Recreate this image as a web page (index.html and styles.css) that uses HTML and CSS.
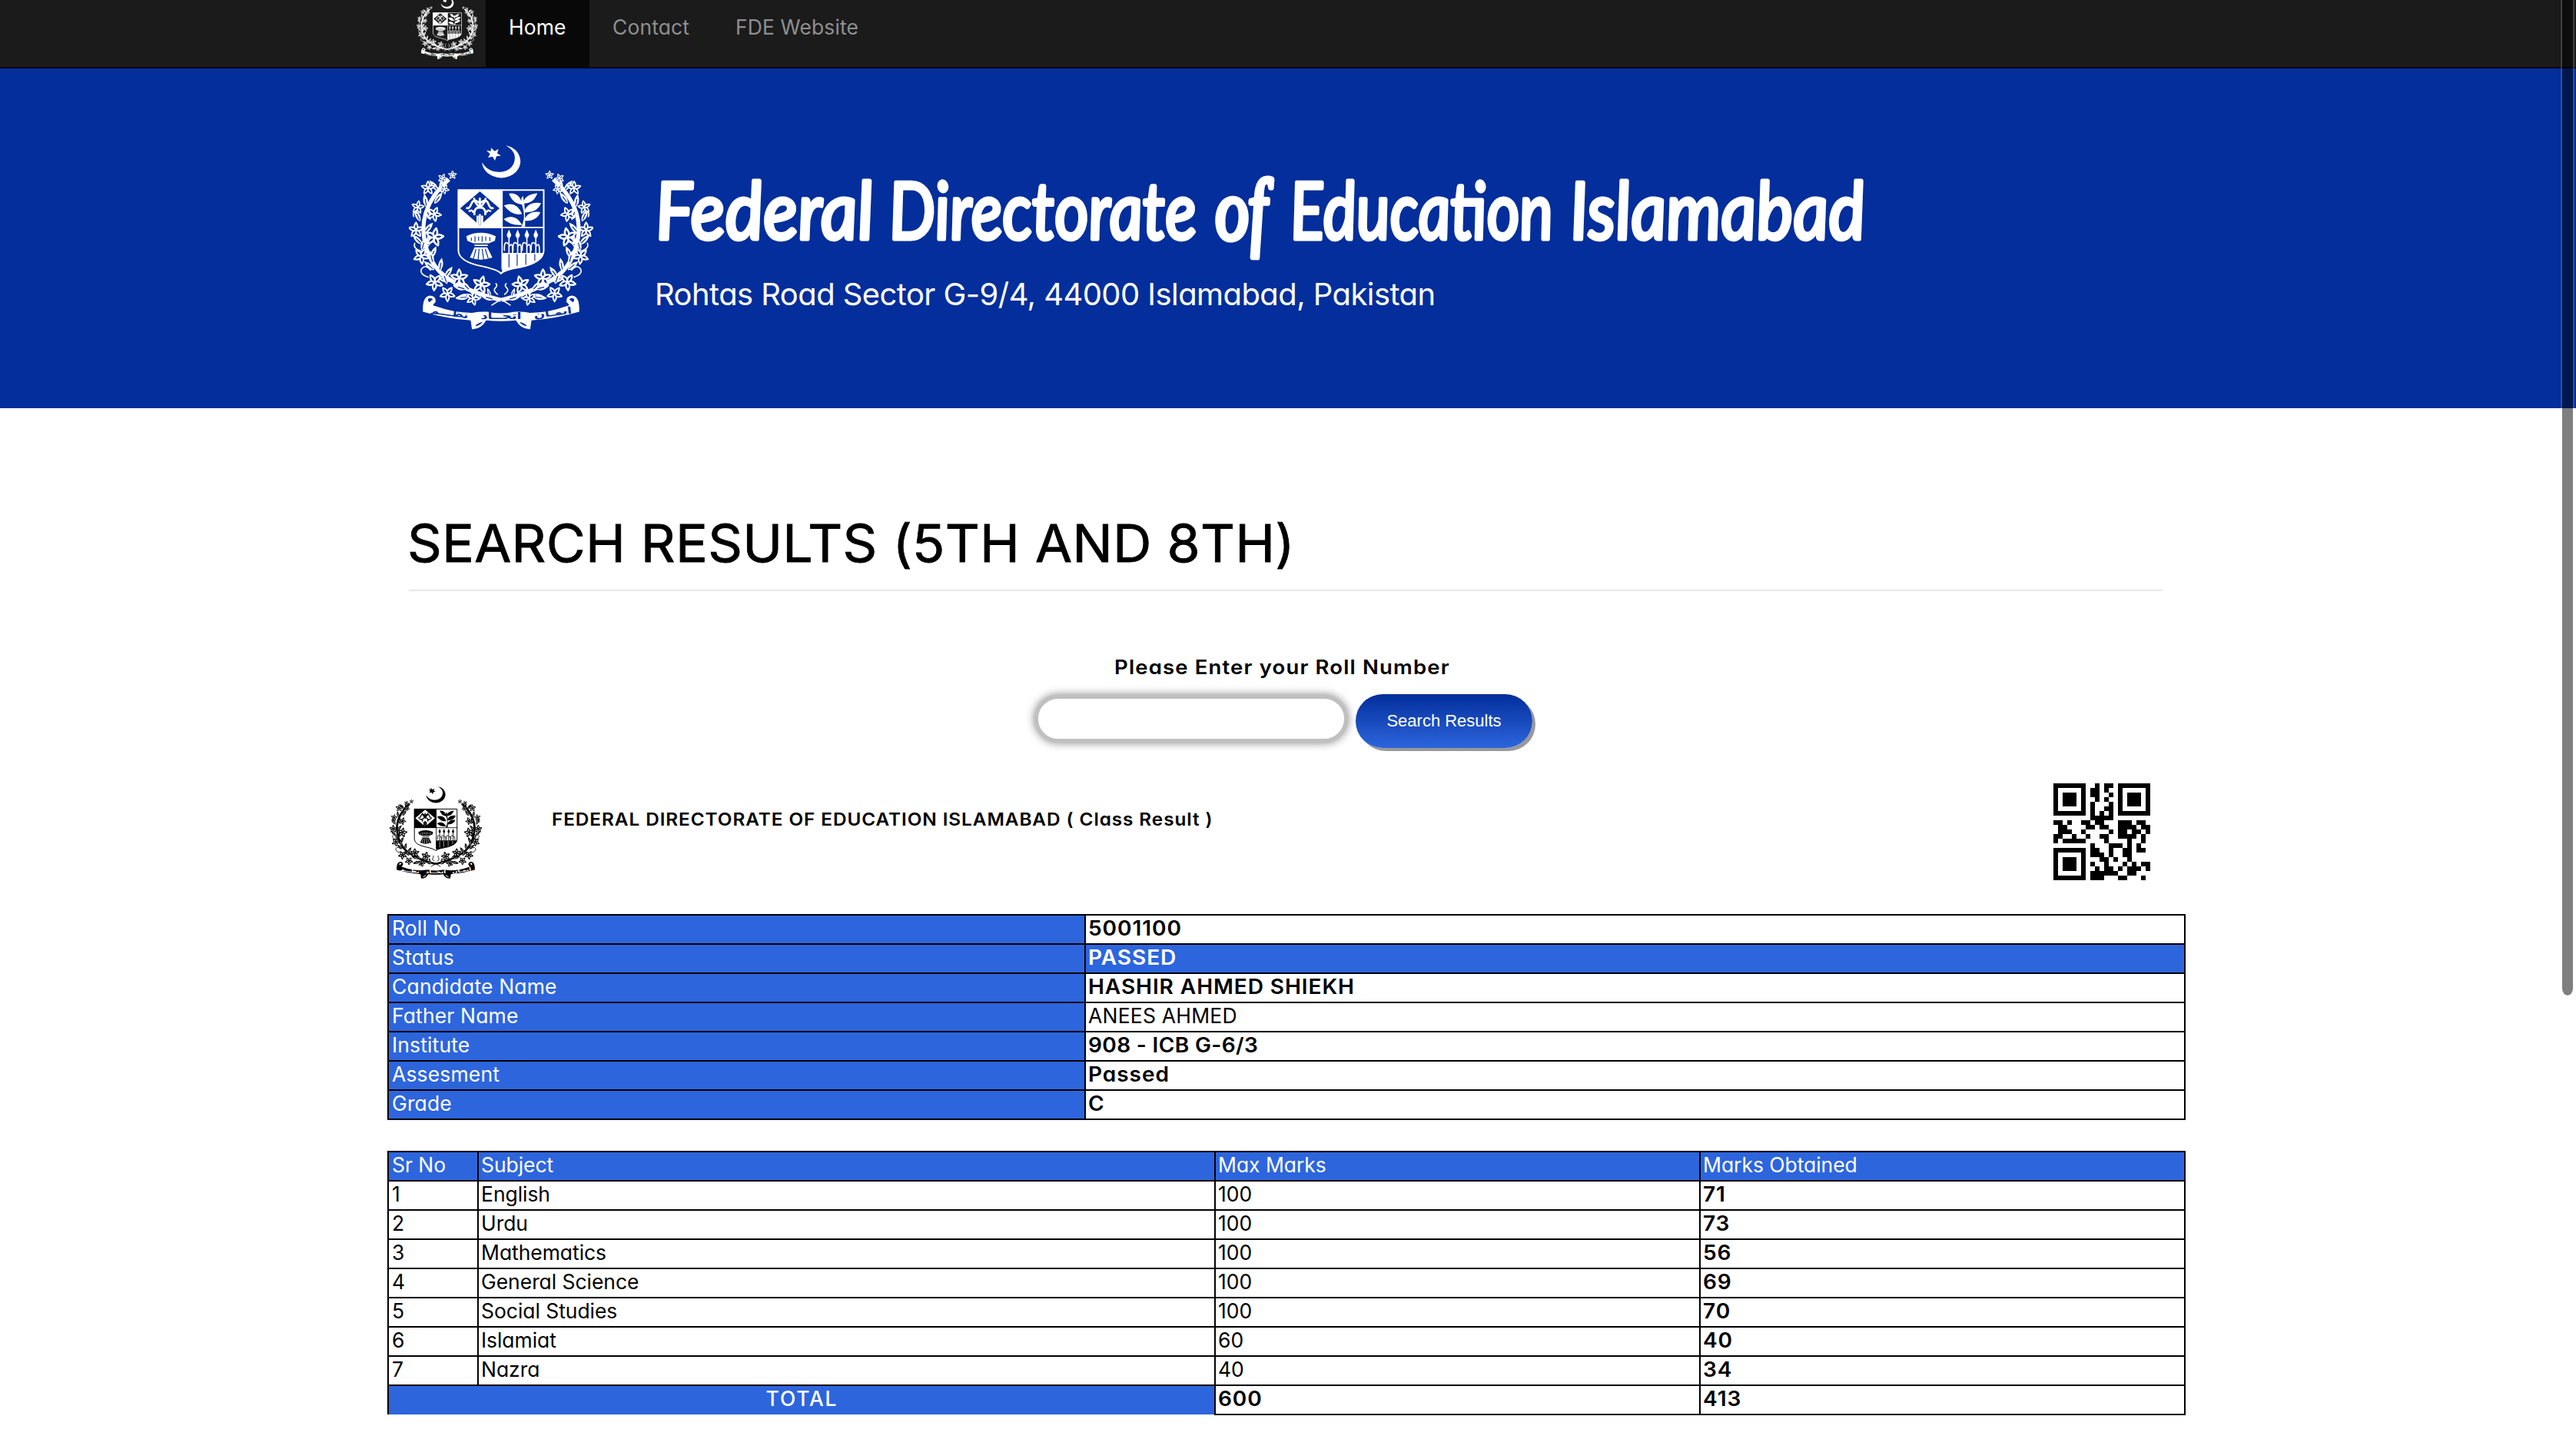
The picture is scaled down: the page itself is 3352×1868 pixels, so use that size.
FILE: index.html
```html
<!DOCTYPE html>
<html lang="en">
<head>
<meta charset="utf-8">
<title>Federal Directorate of Education Islamabad</title>
<link rel="stylesheet" href="styles.css">
</head>
<body>
<svg class="defs" aria-hidden="true">
  <defs>
    <g id="flower">
      <path id="petal" class="cut" d="M0 0Q-14 -12 0 -31Q14 -12 0 0Z"/>
      <use href="#petal" transform="rotate(72)"/>
      <use href="#petal" transform="rotate(144)"/>
      <use href="#petal" transform="rotate(216)"/>
      <use href="#petal" transform="rotate(288)"/>
      <circle class="ink" r="5"/>
    </g>
    <g id="leaf">
      <path class="ink" d="M0 0Q-19 -22 0 -54Q19 -22 0 0Z"/>
      <path class="vein" d="M0 -8V-34"/>
    </g>
    <g id="branch">
      <path class="stem" d="M222 190Q120 280 122 390Q128 500 200 565Q290 630 425 662"/>
      <use href="#leaf" transform="translate(195 245) rotate(-5)"/>
      <use href="#leaf" transform="translate(180 235) rotate(-40)"/>
      <use href="#leaf" transform="translate(165 285) rotate(35)"/>
      <use href="#leaf" transform="translate(135 300) rotate(-10)"/>
      <use href="#leaf" transform="translate(150 350) rotate(-20)"/>
      <use href="#leaf" transform="translate(110 355) rotate(-25)"/>
      <use href="#leaf" transform="translate(125 400) rotate(40)"/>
      <use href="#leaf" transform="translate(140 455) rotate(5)"/>
      <use href="#leaf" transform="translate(118 445) rotate(-45)"/>
      <use href="#leaf" transform="translate(115 470) rotate(15)"/>
      <use href="#leaf" transform="translate(150 500) rotate(25)"/>
      <use href="#leaf" transform="translate(160 520) rotate(-15)"/>
      <use href="#leaf" transform="translate(165 545) rotate(-50)"/>
      <use href="#leaf" transform="translate(185 550) rotate(10)"/>
      <use href="#leaf" transform="translate(205 575) rotate(35)"/>
      <use href="#leaf" transform="translate(225 590) rotate(-70)"/>
      <use href="#leaf" transform="translate(215 600) rotate(-20)"/>
      <use href="#leaf" transform="translate(290 620) rotate(-75)"/>
      <use href="#leaf" transform="translate(305 625) rotate(-45)"/>
      <use href="#leaf" transform="translate(300 640) rotate(-110)"/>
      <use href="#leaf" transform="translate(350 655) rotate(-60)"/>
      <use href="#leaf" transform="translate(300 650) rotate(-95)"/>
      <use href="#leaf" transform="translate(400 660) rotate(-75)"/>
      <use href="#leaf" transform="translate(385 650) rotate(-20) scale(.7)"/>
      <path class="line" d="M140 572Q105 560 115 540Q130 520 150 545M112 470Q80 460 88 440M84 335Q78 320 92 312"/>
      <path class="line" d="M462 682L420 655M412 640Q392 625 404 614Q414 604 406 598"/>
      <use href="#flower" transform="translate(236 173) scale(.52)"/>
      <use href="#flower" transform="translate(197 186) scale(.58) rotate(20)"/>
      <use href="#flower" transform="translate(140 224) scale(.85)"/>
      <use href="#flower" transform="translate(204 228) scale(.6) rotate(30)"/>
      <use href="#flower" transform="translate(100 299) scale(.8) rotate(10)"/>
      <use href="#flower" transform="translate(164 326) scale(.9) rotate(25)"/>
      <use href="#flower" transform="translate(93 388) scale(.95)"/>
      <use href="#flower" transform="translate(165 416) scale(1.15) rotate(12)"/>
      <use href="#flower" transform="translate(114 490) scale(1) rotate(30)"/>
      <use href="#flower" transform="translate(166 592) scale(1.05) rotate(40)"/>
      <use href="#flower" transform="translate(262 576) scale(1.08)"/>
      <use href="#flower" transform="translate(348 602) scale(1.08) rotate(15)"/>
      <use href="#flower" transform="translate(216 638) scale(.95) rotate(35)"/>
      <use href="#flower" transform="translate(316 656) scale(.85) rotate(20)"/>
    </g>
    <g id="jute">
      <path class="ink" d="M-9 20L0 -2L9 20L5 30H-5Z"/>
      <path class="line" d="M0 26V92M-3 54Q-20 38 -18 80M3 62Q16 44 14 92"/>
    </g>
    <symbol id="emblem" viewBox="65 55 722 722">
      <path class="ink" d="M443 57C480 62 502 90 502 120C500 160 465 184 425 184C385 182 352 155 352 123C365 150 395 163 425 161C460 158 480 135 480 105C480 85 465 67 443 57Z"/>
      <path class="ink" d="M387 66L401 80L416 71L411 88L426 97L408 99L402 117L393 101L375 105L383 90L369 77L386 80Z"/>
      <use href="#branch"/>
      <use href="#branch" transform="matrix(-1 0 0 1 852 0)"/>
      <path class="shield" d="M259 232H593V470Q590 515 500 534Q440 543 426 558Q412 543 352 530Q262 512 259 470Z"/>
      <path class="ink" d="M257 230H430V380H257Z"/>
      <path class="ground" d="M343 237L420 303L343 370L266 303Z"/>
      <path class="thick" d="M343 262V300M343 300Q318 300 322 330M343 300Q368 300 364 330M343 285Q320 260 310 285T290 300M343 285Q366 260 376 285T396 300M320 262Q322 282 343 300Q364 282 366 262M334 332V366M343 326V368M352 332V366M300 316Q312 305 318 320M386 316Q374 305 368 320"/>
      <path class="line" d="M430 232V540M259 378H593"/>
      <path class="ink" d="M505 375Q525 340 508 290Q500 262 512 255Q522 300 520 375ZM508 288Q470 285 457 245Q500 240 508 288ZM512 285Q515 250 568 244Q555 285 512 285ZM508 325Q470 335 437 292Q485 272 508 325ZM516 318Q530 275 583 283Q565 325 516 318ZM508 368Q465 372 436 345Q480 320 508 368ZM516 352Q530 310 580 318Q565 355 516 352Z"/>
      <path class="ink" d="M290 412Q345 385 405 412L402 430L378 440H318L294 430ZM322 456H372L392 496Q345 512 304 496Z"/>
      <path class="vein" d="M310 418V430M324 412V434M338 414V430M352 412V434M366 414V430M382 416V432M328 462L318 500M340 462L336 504M352 462L358 504M364 462L376 500"/>
      <path class="line" d="M324 448H372"/>
      <use href="#jute" transform="translate(457 388)"/>
      <use href="#jute" transform="translate(491 388)"/>
      <use href="#jute" transform="translate(527 388)"/>
      <use href="#jute" transform="translate(562 388)"/>
      <path class="ink" d="M430 478H593Q590 515 500 534Q440 543 430 556Z"/>
      <path class="vein" d="M457 482V534M489 482V528M523 482V524M558 482V508"/>
      <path class="ink" d="M120 690Q122 648 148 645Q172 646 170 670Q150 685 170 686Q240 712 312 712Q345 706 372 708Q426 720 480 708Q510 706 540 712Q612 712 682 686Q702 685 682 670Q680 646 704 645Q730 648 732 690V708Q640 735 545 742L540 776Q505 778 484 742Q426 748 368 742Q347 778 312 776L307 742Q212 735 120 708Z"/>
      <path class="cut" d="M148 676Q130 665 140 654Q156 646 164 662Q150 666 148 676ZM704 676Q722 665 712 654Q696 646 688 662Q702 666 704 676ZM318 768Q325 750 360 742Q350 768 318 768ZM534 768Q527 750 492 742Q502 768 534 768Z"/>
      <g class="motto">
        <text x="222" y="724" transform="rotate(8 222 722)" textLength="150" lengthAdjust="spacingAndGlyphs">نظـــم</text>
        <text x="426" y="736" textLength="160" lengthAdjust="spacingAndGlyphs">اتحــاد</text>
        <text x="630" y="724" transform="rotate(-8 630 722)" textLength="150" lengthAdjust="spacingAndGlyphs">ایمـان</text>
      </g>
    </symbol>
  </defs>
</svg>

<nav class="navbar">
  <a class="brand" href="#"><svg class="emblem"><use href="#emblem"/></svg></a>
  <a class="nav-link active" href="#">Home</a>
  <a class="nav-link" href="#">Contact</a>
  <a class="nav-link" href="#">FDE Website</a>
</nav>

<header class="banner">
  <svg class="emblem banner-emblem"><use href="#emblem"/></svg>
  <div class="banner-text">
    <svg class="script-title" viewBox="0 0 1600 135" role="heading" aria-level="1">
      <g transform="translate(0 88) skewX(4)">
        <text x="2" textLength="284" lengthAdjust="spacingAndGlyphs">Federal</text>
        <text x="306" textLength="400" lengthAdjust="spacingAndGlyphs">Directorate</text>
        <text class="deep" x="730" textLength="68" lengthAdjust="spacingAndGlyphs">of</text>
        <text x="828" textLength="342" lengthAdjust="spacingAndGlyphs">Education</text>
        <text x="1192" textLength="384" lengthAdjust="spacingAndGlyphs">Islamabad</text>
      </g>
    </svg>
    <p class="address">Rohtas Road Sector G-9/4, 44000 Islamabad, Pakistan</p>
  </div>
</header>

<main>
  <h1 class="page-title"><span class="wide">SEARCH RESULTS (5TH AND 8TH)</span></h1>

  <form class="search">
    <label class="search-label" for="roll"><span class="wide">Please Enter your Roll Number</span></label>
    <div class="search-row">
      <input class="search-input" id="roll" type="text">
      <button class="search-button" type="button">Search Results</button>
    </div>
  </form>

  <section class="result">
    <div class="result-head">
      <svg class="emblem result-emblem"><use href="#emblem"/></svg>
      <h2 class="result-title"><span class="wide">FEDERAL DIRECTORATE OF EDUCATION ISLAMABAD ( Class Result )</span></h2>
      <svg class="qr" viewBox="0 0 21 21">
        <path fill-rule="evenodd" d="M0 0h7v7h-7zM1 1v5h5v-5zM2 2h3v3h-3zM14 0h7v7h-7zM15 1v5h5v-5zM16 2h3v3h-3zM0 14h7v7h-7zM1 15v5h5v-5zM2 16h3v3h-3z"/>
        <path d="M9 0h1v1h-1zM11 0h2v1h-2zM8 1h2v1h-2zM11 1h1v1h-1zM8 2h2v1h-2zM12 2h1v1h-1zM9 3h1v1h-1zM11 3h1v1h-1zM8 4h1v1h-1zM12 4h1v1h-1zM8 5h1v1h-1zM11 5h2v1h-2zM8 6h1v1h-1zM10 6h1v1h-1zM12 6h1v1h-1zM8 7h5v1h-5z
          M0 8h2v1h-2zM3 8h1v1h-1zM6 8h2v1h-2zM9 8h2v1h-2zM14 8h3v1h-3zM18 8h2v1h-2zM1 9h2v1h-2zM7 9h2v1h-2zM10 9h2v1h-2zM14 9h4v1h-4zM19 9h2v1h-2zM1 10h3v1h-3zM6 10h1v1h-1zM12 10h1v1h-1zM14 10h2v1h-2zM17 10h2v1h-2zM20 10h1v1h-1z
          M0 11h2v1h-2zM4 11h1v1h-1zM7 11h1v1h-1zM10 11h2v1h-2zM14 11h4v1h-4zM19 11h1v1h-1zM0 12h1v1h-1zM2 12h5v1h-5zM11 12h1v1h-1zM16 12h1v1h-1zM19 12h1v1h-1zM8 13h1v1h-1zM12 13h3v1h-3zM16 13h1v1h-1zM18 13h1v1h-1z
          M8 14h2v1h-2zM12 14h1v1h-1zM15 14h2v1h-2zM18 14h2v1h-2zM8 15h3v1h-3zM12 15h1v1h-1zM15 15h2v1h-2zM10 16h2v1h-2zM13 16h1v1h-1zM16 16h1v1h-1zM8 17h1v1h-1zM11 17h1v1h-1zM15 17h1v1h-1zM17 17h1v1h-1zM19 17h2v1h-2z
          M9 18h1v1h-1zM11 18h2v1h-2zM14 18h1v1h-1zM16 18h3v1h-3zM20 18h1v1h-1zM8 19h6v1h-6zM16 19h2v1h-2zM8 20h3v1h-3zM14 20h2v1h-2zM19 20h1v1h-1z"/>
      </svg>
    </div>

    <table class="grid info">
      <colgroup><col class="c-name"><col></colgroup>
      <tr><th>Roll No</th><td><b>5001100</b></td></tr>
      <tr><th>Status</th><td class="fill"><b>PASSED</b></td></tr>
      <tr><th>Candidate Name</th><td><b>HASHIR AHMED SHIEKH</b></td></tr>
      <tr><th>Father Name</th><td>ANEES AHMED</td></tr>
      <tr><th>Institute</th><td><b class="tight">908 - ICB G-6/3</b></td></tr>
      <tr><th>Assesment</th><td><b>Passed</b></td></tr>
      <tr><th>Grade</th><td><b>C</b></td></tr>
    </table>

    <table class="grid marks">
      <colgroup><col class="c-sr"><col class="c-subject"><col class="c-max"><col></colgroup>
      <tr><th>Sr No</th><th>Subject</th><th>Max Marks</th><th>Marks Obtained</th></tr>
      <tr><td>1</td><td>English</td><td>100</td><td><b>71</b></td></tr>
      <tr><td>2</td><td>Urdu</td><td>100</td><td><b>73</b></td></tr>
      <tr><td>3</td><td>Mathematics</td><td>100</td><td><b>56</b></td></tr>
      <tr><td>4</td><td>General Science</td><td>100</td><td><b>69</b></td></tr>
      <tr><td>5</td><td>Social Studies</td><td>100</td><td><b>70</b></td></tr>
      <tr><td>6</td><td>Islamiat</td><td>60</td><td><b>40</b></td></tr>
      <tr><td>7</td><td>Nazra</td><td>40</td><td><b>34</b></td></tr>
      <tr><td class="fill total" colspan="2">TOTAL</td><td><b>600</b></td><td><b>413</b></td></tr>
    </table>
  </section>
</main>
<div class="scroll-thumb"></div>
</body>
</html>
```
FILE: styles.css
```css
* { box-sizing: border-box; }

body {
  margin: 0;
  height: 1868px;
  overflow: hidden;
  background: #fff;
  color: #000;
  font: 26.5px/36px Inter, "Liberation Sans", sans-serif;
  font-feature-settings: "cv11";
}

.defs { position: absolute; width: 0; height: 0; }

.wide { display: inline-block; white-space: nowrap; transform-origin: 0 50%; }

/* State emblem */
.emblem { display: block; color: #fff; --ground: #032e9b; }
.ink { fill: currentColor; }
.ground { fill: var(--ground); }
.cut { fill: var(--ground); stroke: currentColor; stroke-width: 6.5; stroke-linejoin: round; }
.vein { fill: none; stroke: var(--ground); stroke-width: 3.5; }
.stem { fill: none; stroke: currentColor; stroke-width: 16; }
.line { fill: none; stroke: currentColor; stroke-width: 5; stroke-linecap: round; }
.thick { fill: none; stroke: currentColor; stroke-width: 8; }
.shield { fill: var(--ground); stroke: currentColor; stroke-width: 6; }
.motto { fill: var(--ground); font: bold 36px "DejaVu Sans", sans-serif; text-anchor: middle; }

/* Top bar */
.navbar {
  display: flex;
  height: 89px;
  padding-left: 542px;
  background: #1b1b1b;
  border-bottom: 2px solid #080808;
}
.brand { width: 90px; margin-top: -3px; }
.brand .emblem { width: 80px; height: 80px; --ground: #1b1b1b; }
.nav-link {
  padding: 17px 30px 0;
  color: #8f8f8f;
  text-decoration: none;
  letter-spacing: .1px;
}
.nav-link.active { width: 135px; background: #080808; color: #fff; }

/* Banner */
.banner {
  display: flex;
  height: 442px;
  padding: 99px 0 0 532px;
  background: #032e9b;
  color: #fff;
}
.banner-emblem { width: 240px; height: 241px; }
.banner-text { margin: 35px 0 0 81px; }
.script-title { display: block; width: 1600px; height: 135px; overflow: visible; }
.script-title text {
  font: italic 103px Lato, sans-serif;
  fill: #fff;
  stroke: #fff;
  stroke-width: 5;
  stroke-linejoin: round;
}
.script-title .deep { font: italic 112px "Liberation Serif", serif; stroke-width: 7; }
.address { margin: 1px 0 0 -1px; font-size: 40px; line-height: 48px; letter-spacing: -.58px; }

/* Search */
.page-title {
  margin: 139px 538px 0 532px;
  padding-bottom: 23px;
  border-bottom: 2px solid #e7e7e7;
  font-size: 67px;
  line-height: 74px;
  font-weight: 400;
  -webkit-text-stroke: .8px #000;
}
.page-title .wide { margin-left: -2px; letter-spacing: .2px; transform: scaleX(1.042); }
.search { width: 648px; margin: 81px 0 0 1346px; }
.search-label {
  display: block;
  padding-left: 104px;
  margin-bottom: 17px;
  font-size: 25.5px;
  font-weight: 600;
  letter-spacing: 1.05px;
}
.search-label .wide { transform: scaleX(1.08); }
.search-row { display: flex; justify-content: space-between; height: 70px; }
.search-input {
  width: 408px;
  height: 62px;
  margin-top: 1px;
  border: 5px solid #c0c0c0;
  border-radius: 31px;
  box-shadow: 0 0 12px rgba(0, 0, 0, .5);
  background: #fff;
}
.search-button {
  width: 230px;
  height: 70px;
  padding: 0;
  border: 0;
  border-radius: 35px;
  background: linear-gradient(#032e9b, #2d65dd);
  box-shadow: 4px 4px 0 #999;
  color: #fff;
  font: 22px "Liberation Sans", Arial, sans-serif;
}

/* Result */
.result { width: 2340px; margin: 50px 0 0 504px; }
.result-head { display: flex; height: 166px; padding: 0 46px 0 3px; }
.result-emblem { width: 120px; height: 120px; color: #000; --ground: #fff; }
.result-title {
  flex: 1;
  margin: 28px 0 0 91px;
  font-size: 23px;
  line-height: 30px;
  font-weight: 600;
  letter-spacing: .84px;
}
.result-title .wide { transform: scaleX(1.06); }
.qr { width: 126px; height: 126px; margin-top: -4px; shape-rendering: crispEdges; }

.grid { width: 2340px; table-layout: fixed; border-collapse: collapse; }
.grid th, .grid td {
  height: 38px;
  padding: 0 3px 3px;
  border: 2px solid #000;
  line-height: 33px;
  font-weight: 400;
  text-align: left;
  vertical-align: top;
  letter-spacing: -.05px;
}
.grid tr > :first-child { padding-left: 4px; }
.info th { letter-spacing: .15px; }
.info td { letter-spacing: .2px; }
.grid th, .grid .fill { background: #2d65dd; color: #fff; }
.grid b {
  display: inline-block;
  font-weight: 600;
  letter-spacing: .85px;
  transform: scaleX(1.06);
  transform-origin: 0 50%;
}
.grid .tight { letter-spacing: .3px; }
.c-name { width: 907px; }
.c-sr { width: 117px; }
.c-subject { width: 959px; }
.c-max { width: 631px; }
.marks { margin-top: 40px; }
.marks .total { border-bottom: 0; text-align: center; font-weight: 500; letter-spacing: 1.8px; }

/* Overlay scrollbar */
.scroll-thumb {
  position: absolute;
  top: 0;
  right: 2px;
  width: 18px;
  height: 1295px;
  background: rgba(0, 0, 0, .5);
  background-clip: padding-box;
  border: solid rgba(255, 255, 255, .16);
  border-width: 0 2px;
  border-radius: 0 0 9px 9px;
}
```
